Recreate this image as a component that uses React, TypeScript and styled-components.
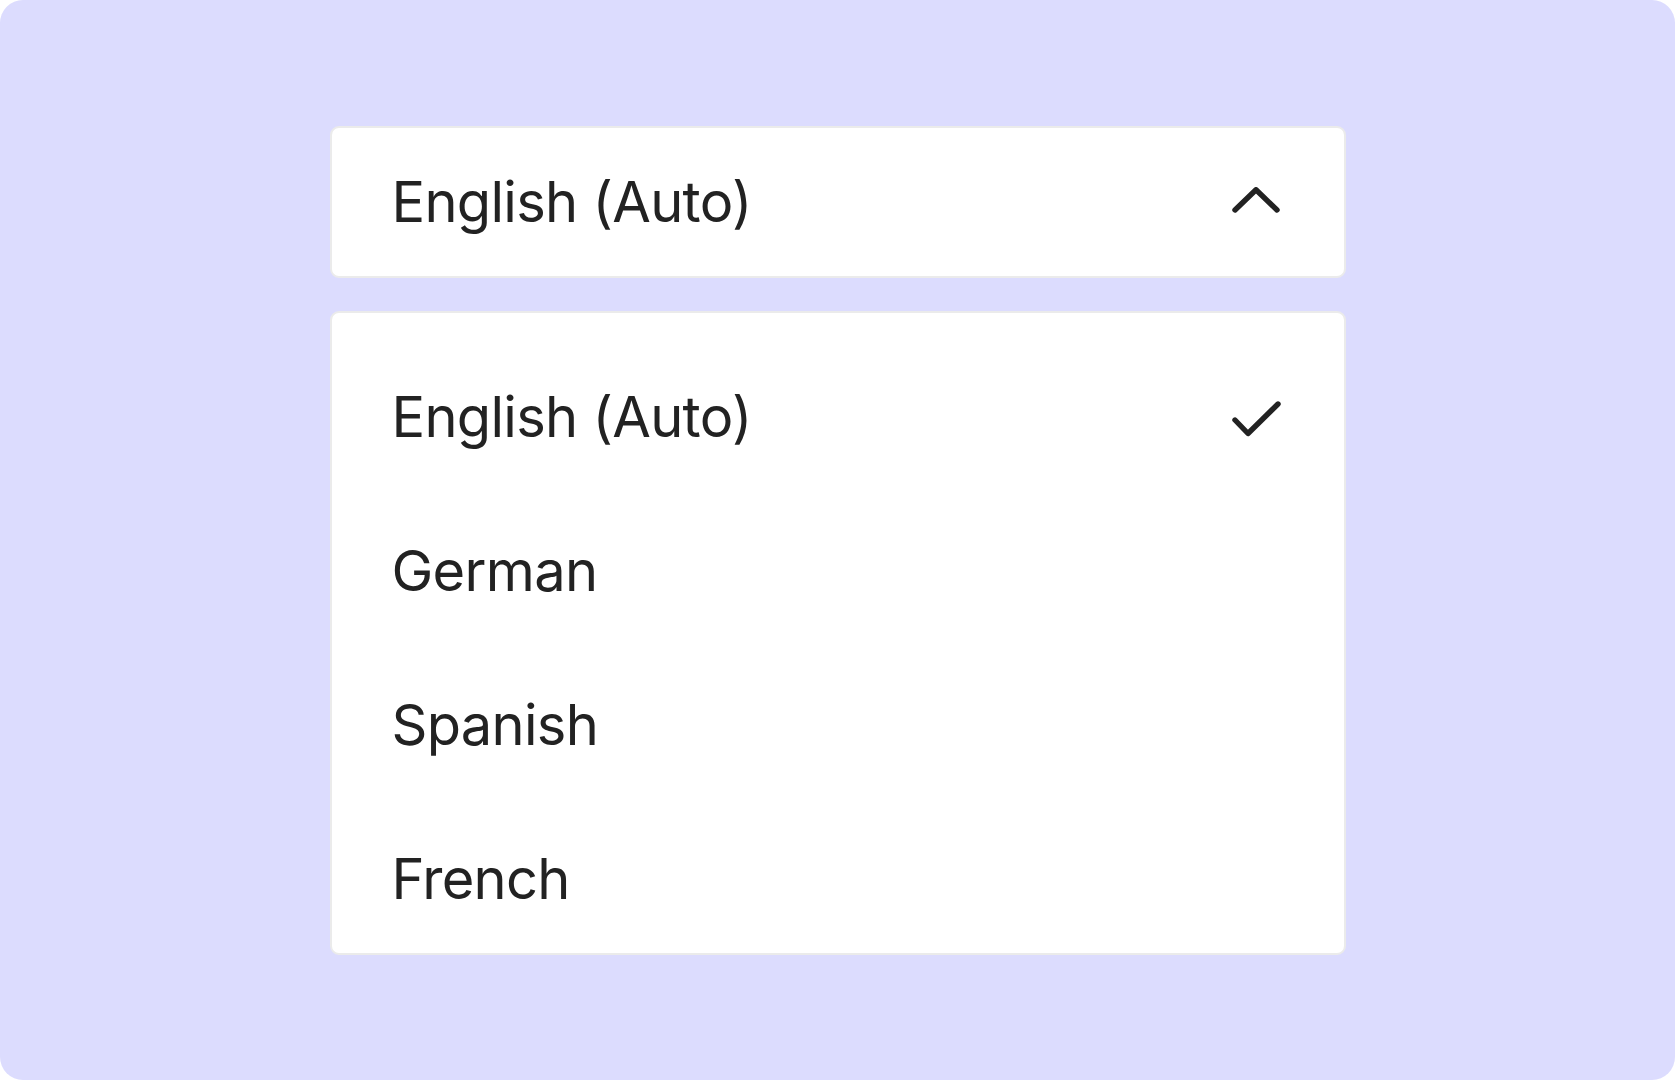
import React from "react";
import styled, { createGlobalStyle } from "styled-components";

const GlobalStyle = createGlobalStyle`
  html, body { margin: 0; padding: 0; background: #ffffff; }
  body { font-family: Inter, "Noto Sans", sans-serif; }
  * { box-sizing: border-box; }
`;

const Canvas = styled.div`
  width: 1675px;
  height: 1080px;
  background: #dcdcfe;
  border-radius: 23px;
  display: flex;
  flex-direction: column;
  align-items: center;
  justify-content: center;
  gap: 33px;
`;

const Panel = styled.div`
  width: 1016px;
  background: #ffffff;
  border: 2px solid #ebebeb;
  border-radius: 9px;
`;

const Trigger = styled(Panel)`
  height: 152px;
  display: flex;
  align-items: center;
  justify-content: space-between;
  padding: 0 64px 0 60px;
`;

const List = styled(Panel)`
  height: 644px;
  padding-top: 27px;
  display: flex;
  flex-direction: column;
`;

const Option = styled.div`
  height: 154px;
  flex: none;
  display: flex;
  align-items: center;
  justify-content: space-between;
  padding: 0 63px 0 60px;
`;

const Label = styled.span`
  font-family: Inter, "Noto Sans", sans-serif;
  font-size: 56px;
  font-weight: 400;
  color: #222222;
  line-height: 1;
  letter-spacing: -0.7px;
`;

const Icon = styled.svg<{ $shift?: number }>`
  display: block;
  flex: none;
  margin-top: ${(p) => p.$shift ?? 0}px;
`;

const ChevronUp = () => (
  <Icon width="48" height="26" viewBox="0 0 48 26" $shift={-3}>
    <polyline
      points="3,23 24,2.8 45,23"
      fill="none"
      stroke="#222222"
      strokeWidth="5.4"
      strokeLinecap="round"
      strokeLinejoin="round"
    />
  </Icon>
);

const Check = () => (
  <Icon width="49" height="36" viewBox="0 0 49 36" $shift={4}>
    <polyline
      points="3,19 16,32.5 46,3"
      fill="none"
      stroke="#222222"
      strokeWidth="5.4"
      strokeLinecap="round"
      strokeLinejoin="round"
    />
  </Icon>
);

const options = ["English (Auto)", "German", "Spanish", "French"];

export default function App() {
  const selected = "English (Auto)";
  return (
    <>
      <GlobalStyle />
      <Canvas>
        <Trigger>
          <Label>{selected}</Label>
          <ChevronUp />
        </Trigger>
        <List>
          {options.map((o) => (
            <Option key={o}>
              <Label>{o}</Label>
              {o === selected && <Check />}
            </Option>
          ))}
        </List>
      </Canvas>
    </>
  );
}
